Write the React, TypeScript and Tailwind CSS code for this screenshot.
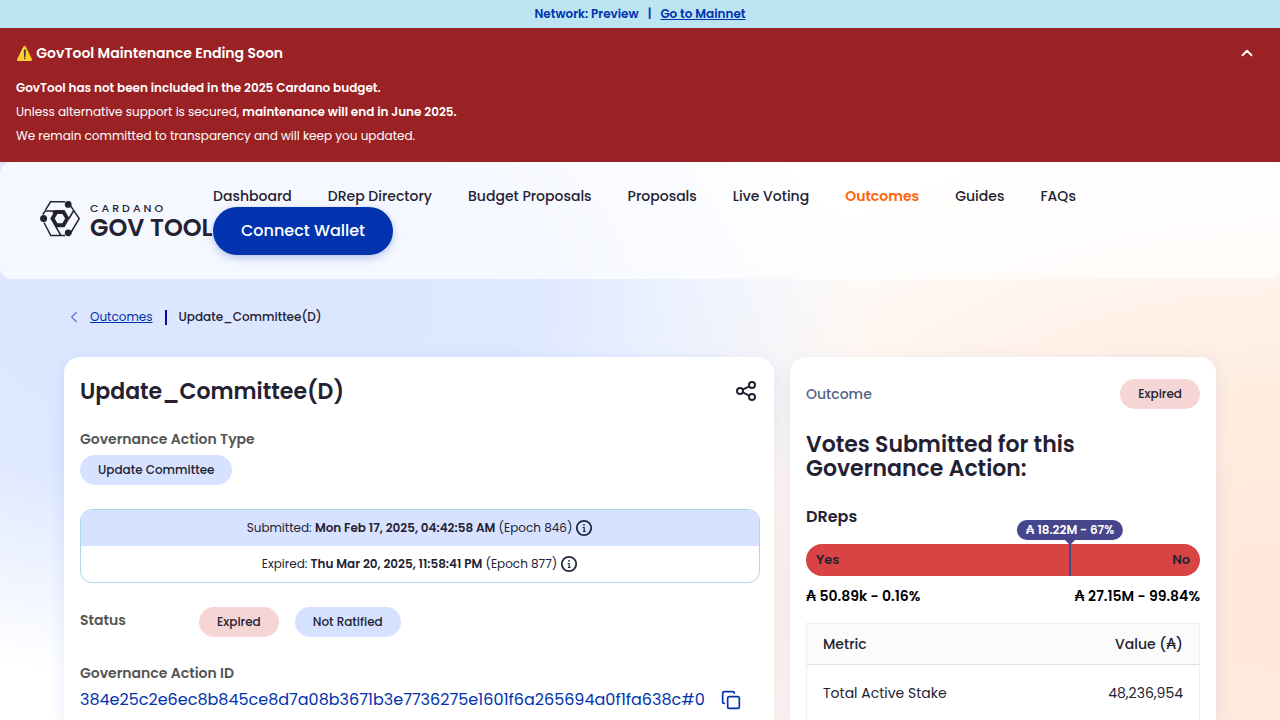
import { ChevronUp, Copy } from "lucide-react";
import type { ReactNode } from "react";

const navItems = [
  "Dashboard",
  "DRep Directory",
  "Budget Proposals",
  "Proposals",
  "Live Voting",
  "Outcomes",
  "Guides",
  "FAQs",
];

function Logo() {
  return (
    <a href="#home" aria-label="Cardano GovTool" className="flex w-[173px] shrink-0 items-center gap-[10px] text-[#242232]">
      <svg viewBox="0 1 40 37" className="mb-[3px] h-[37px] w-10 shrink-0" fill="none" stroke="currentColor" strokeWidth="1.5">
        <path d="M5.5 9.8 10.6 1.8H25M2.8 14.5 5.2 11H14.5L13 13.5M30.8 6.2 39.2 18.6 30.6 33M25 35.6H10.8L4 22.5M33.8 10.5 29 18.5M16 27 21 35.6" />
        <path d="M15.3 9.9h9.2l5 8.7-5 8.7h-9.2l-5-8.7z" fill="currentColor" stroke="none" />
        <path d="M17.4 14h5l2.7 4.6-2.7 4.6h-5l-2.7-4.6z" fill="#f5f8ff" stroke="none" />
        <g fill="currentColor" stroke="none">
          <circle cx="28.2" cy="4.4" r="3.4" />
          <circle cx="3.6" cy="18.6" r="3.5" />
          <circle cx="28.2" cy="32.8" r="3.4" />
        </g>
      </svg>
      <span className="flex flex-col gap-[2px] whitespace-nowrap">
        <span className="text-[11px] font-medium leading-3 tracking-[3px]">CARDANO</span>
        <span className="text-[24px] font-semibold leading-6">GOV TOOL</span>
      </span>
    </a>
  );
}

function Chip({ tone, children }: { tone: "blue" | "red"; children: ReactNode }) {
  return (
    <span
      className={`inline-flex h-[30px] items-center whitespace-nowrap rounded-full px-[18px] text-[12px] font-medium text-[#242232] ${
        tone === "blue" ? "bg-[#d6e2ff]" : "bg-[#f6d5d5]"
      }`}
    >
      {children}
    </span>
  );
}

function InfoIcon() {
  return (
    <svg viewBox="0 0 18 18" className="h-[18px] w-[18px]" fill="none" stroke="#212a3d" strokeWidth="1.8">
      <circle cx="9" cy="9" r="7.2" />
      <path d="M7.6 8.5H9.2V12.2M8 12.4H10.6" strokeWidth="1.2" />
      <circle cx="9" cy="5.8" r="0.9" fill="#212a3d" stroke="none" />
    </svg>
  );
}

function ShareIcon() {
  return (
    <svg viewBox="0 0 20 20" className="h-5 w-5" fill="none" stroke="#242232" strokeWidth="2">
      <circle cx="4" cy="10" r="3" />
      <circle cx="16" cy="4" r="3" />
      <circle cx="16" cy="16" r="3" />
      <path d="m6.7 8.6 6.6-3.2M6.7 11.4l6.6 3.2" />
    </svg>
  );
}

function DateRow({ label, date, epoch, shaded }: { label: string; date: string; epoch: string; shaded?: boolean }) {
  return (
    <div className={`flex h-9 items-center justify-center gap-[3px] text-[12px] ${shaded ? "bg-[#d6e2ff]" : ""}`}>
      <p>
        {label}: <b className="font-semibold">{date}</b> ({epoch})
      </p>
      <button type="button" aria-label={`About ${label.toLowerCase()} date`}>
        <InfoIcon />
      </button>
    </div>
  );
}

export default function App() {
  return (
    <div className="flex min-h-screen flex-col bg-white bg-[radial-gradient(ellipse_660px_380px_at_16%_42%,#dbe6ff_0%,#dee8ff_50%,transparent_100%),radial-gradient(ellipse_760px_520px_at_100%_84%,#ffe8da_0%,#ffecdf_40%,transparent_100%)] font-[Poppins,Inter,sans-serif] text-[#242232]">
      <div className="flex h-7 items-center justify-center gap-[9px] bg-[#bce4f2] text-[12px] font-semibold text-[#0033ad]">
        <span>Network: Preview</span>
        <span>|</span>
        <a href="#mainnet" className="underline">Go to Mainnet</a>
      </div>

      <section className="bg-[#9b2224] px-4 pb-[14px] pt-[13px] text-white">
        <div className="flex h-6 items-center justify-between">
          <h2 className="text-[14px] font-semibold">⚠️ GovTool Maintenance Ending Soon</h2>
          <button type="button" aria-label="Collapse" className="mr-2">
            <ChevronUp size={18} strokeWidth={2.5} />
          </button>
        </div>
        <div className="mt-[11px] text-[12px] leading-6">
          <p className="font-semibold">GovTool has not been included in the 2025 Cardano budget.</p>
          <p>
            Unless alternative support is secured, <b className="font-semibold">maintenance will end in June 2025.</b>
          </p>
          <p>We remain committed to transparency and will keep you updated.</p>
        </div>
      </section>

      <header className="flex items-center rounded-xl bg-white/70 px-10 py-6">
        <Logo />
        <div className="relative min-w-0 flex-1">
          <nav className="flex h-[21px] items-center gap-9 whitespace-nowrap text-[14px] font-medium">
            {navItems.map((item) => (
              <a key={item} href="#nav" className={item === "Outcomes" ? "font-semibold text-[#ff640a]" : ""}>
                {item}
              </a>
            ))}
          </nav>
          <button
            type="button"
            className="h-12 rounded-full bg-[#0033ad] px-7 text-[16px] font-medium text-white shadow-[0_3px_8px_rgba(0,51,173,0.25)]"
          >
            Connect Wallet
          </button>
        </div>
      </header>

      <main className="flex flex-1 flex-col px-16">
        <nav aria-label="Breadcrumb" className="mb-[2px] flex h-[76px] items-center text-[12px]">
          <svg viewBox="0 0 8 12" className="ml-[6px] mr-3 h-3 w-2" fill="none" stroke="#0033ad" strokeOpacity="0.6" strokeWidth="1.2">
            <path d="M6.8 1 1.6 6l5.2 5" />
          </svg>
          <a href="#outcomes" className="text-[#0033ad] underline">Outcomes</a>
          <span className="mx-3 h-[15px] w-[2px] bg-[#0a0a9c]" />
          <span className="font-medium">Update_Committee(D)</span>
        </nav>

        <div className="grid flex-1 grid-cols-[5fr_3fr] gap-4">
          <section className="rounded-t-2xl bg-white pl-4 pr-[14px] pt-4 shadow-[0_4px_15px_rgba(47,98,220,0.12)]">
            <div className="flex h-9 items-center justify-between">
              <h1 className="text-[22px] font-semibold">Update_Committee(D)</h1>
              <button type="button" aria-label="Share" className="mr-1">
                <ShareIcon />
              </button>
            </div>
            <h3 className="mt-5 text-[14px] font-semibold leading-5 text-[#545454]">Governance Action Type</h3>
            <div className="mt-[6px] flex">
              <Chip tone="blue">Update Committee</Chip>
            </div>
            <div className="mt-6 overflow-hidden rounded-xl border border-[#add8e6]">
              <DateRow shaded label="Submitted" date="Mon Feb 17, 2025, 04:42:58 AM" epoch="Epoch 846" />
              <DateRow label="Expired" date="Thu Mar 20, 2025, 11:58:41 PM" epoch="Epoch 877" />
            </div>
            <div className="mt-6 flex">
              <h3 className="w-[119px] pt-[3px] text-[14px] font-semibold leading-5 text-[#545454]">Status</h3>
              <div className="flex gap-4">
                <Chip tone="red">Expired</Chip>
                <Chip tone="blue">Not Ratified</Chip>
              </div>
            </div>
            <h3 className="mt-[26px] text-[14px] font-semibold leading-5 text-[#545454]">Governance Action ID</h3>
            <div className="mt-[5px] flex items-center gap-4 text-[#0033ad]">
              <span className="text-[16px] leading-6">384e25c2e6ec8b845ce8d7a08b3671b3e7736275e1601f6a265694a0f1fa638c#0</span>
              <button type="button" aria-label="Copy governance action ID">
                <Copy size={20} strokeWidth={2} />
              </button>
            </div>
          </section>

          <section className="rounded-t-2xl bg-white px-4 pt-[22px] shadow-[0_4px_15px_rgba(47,98,220,0.12)]">
            <div className="flex items-center justify-between">
              <span className="text-[14px] font-medium text-[#506288]">Outcome</span>
              <Chip tone="red">Expired</Chip>
            </div>
            <h2 className="mt-6 text-[22px] font-semibold leading-6">Votes Submitted for this Governance Action:</h2>
            <h3 className="mt-6 text-[16px] font-semibold leading-6">DReps</h3>
            <div className="relative mt-[15px] flex h-8 items-center justify-between rounded-full bg-[#d84444] px-[10px] text-[13px] font-semibold">
              <span>Yes</span>
              <span>No</span>
              <div className="absolute left-[67%] top-0 h-8 w-[2px] -translate-x-1/2 bg-[#46468c]">
                <div className="absolute -top-6 left-1/2 flex h-5 -translate-x-1/2 items-center whitespace-nowrap rounded-full bg-[#46468c] px-[9px] text-[12px] text-white">
                  ₳ 18.22M - 67%
                </div>
                <svg viewBox="0 0 10 5" className="absolute -left-1 -top-1 h-[5px] w-[10px]" fill="#46468c">
                  <path d="M0 0h10L5 5z" />
                </svg>
              </div>
            </div>
            <div className="mt-[10px] flex justify-between text-[14px] font-semibold leading-5 text-black">
              <span>₳ 50.89k - 0.16%</span>
              <span>₳ 27.15M - 99.84%</span>
            </div>
            <table className="mt-[17px] w-full border-separate border-spacing-0 border border-b-0 border-[#eeeeee] text-[14px]">
              <thead className="bg-[#fbfbfb]">
                <tr className="h-[41px]">
                  <th className="border-b border-[#e0e0e0] px-4 text-left font-medium">Metric</th>
                  <th className="border-b border-[#e0e0e0] px-4 text-right font-medium">Value (₳)</th>
                </tr>
              </thead>
              <tbody>
                <tr>
                  <td className="px-4 pb-[17px] pt-[18px] leading-5">Total Active Stake</td>
                  <td className="px-4 pb-[17px] pt-[18px] text-right leading-5">48,236,954</td>
                </tr>
              </tbody>
            </table>
          </section>
        </div>
      </main>
    </div>
  );
}
